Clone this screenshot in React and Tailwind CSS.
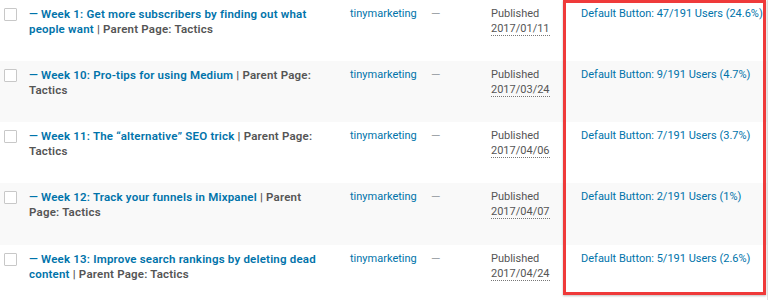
const rows = [
  { title: '— Week 1: Get more subscribers by finding out what people want', date: '2017/01/11', stat: 'Default Button: 47/191 Users (24.6%)', h: 'h-[61px]' },
  { title: '— Week 10: Pro-tips for using Medium', date: '2017/03/24', stat: 'Default Button: 9/191 Users (4.7%)', h: 'h-[61px]' },
  { title: '— Week 11: The “alternative” SEO trick', date: '2017/04/06', stat: 'Default Button: 7/191 Users (3.7%)', h: 'h-[61px]' },
  { title: '— Week 12: Track your funnels in Mixpanel', date: '2017/04/07', stat: 'Default Button: 2/191 Users (1%)', h: 'h-[62px]' },
  { title: '— Week 13: Improve search rankings by deleting dead content', date: '2017/04/24', stat: 'Default Button: 5/191 Users (2.6%)', h: 'h-[61px]' },
];

function Row({ row, index }) {
  const bg = index % 2 === 1 ? 'bg-[#f9f9f9]' : 'bg-white';
  return (
    <div className={`grid grid-cols-[29px_321px_81px_60px_90px_1fr] ${row.h} ${bg}`}>
      <div className="pl-[4px] pt-[8px]">
        <div className="w-[13px] h-[13px] border border-[#c8c8c8] bg-white rounded-[1px]" />
      </div>
      <div className="pt-[7px] pr-[21px] font-semibold text-[11.5px] tracking-[0.2px]">
        <a className="text-[#0073aa]">{row.title}</a>
        <span className="text-[#555]"> | Parent Page: Tactics</span>
      </div>
      <div className="pt-[7px] text-[#0073aa]">tinymarketing</div>
      <div className="pt-[7px] text-[#a0a5aa] text-[12px]">—</div>
      <div className="pt-[7px] text-[#555]">
        <div>Published</div>
        <span className="border-b border-dotted border-[#777]">{row.date}</span>
      </div>
      <div className="pt-[7px] text-[#0073aa] border-r border-[#e1e1e1] whitespace-nowrap">{row.stat}</div>
    </div>
  );
}

export default function App() {
  return (
    <div className="relative w-[768px] h-[300px] overflow-hidden bg-white font-['Roboto',sans-serif] text-[11px] leading-[14.5px]">
      {rows.map((row, i) => (
        <Row key={i} row={row} index={i} />
      ))}
      {/* highlight box */}
      <div className="absolute left-[563px] top-0 w-[203px] h-[295px] border-[3px] border-[#ef3a3a] shadow-[0_1px_2px_rgba(0,0,0,0.25)]" />
    </div>
  );
}
